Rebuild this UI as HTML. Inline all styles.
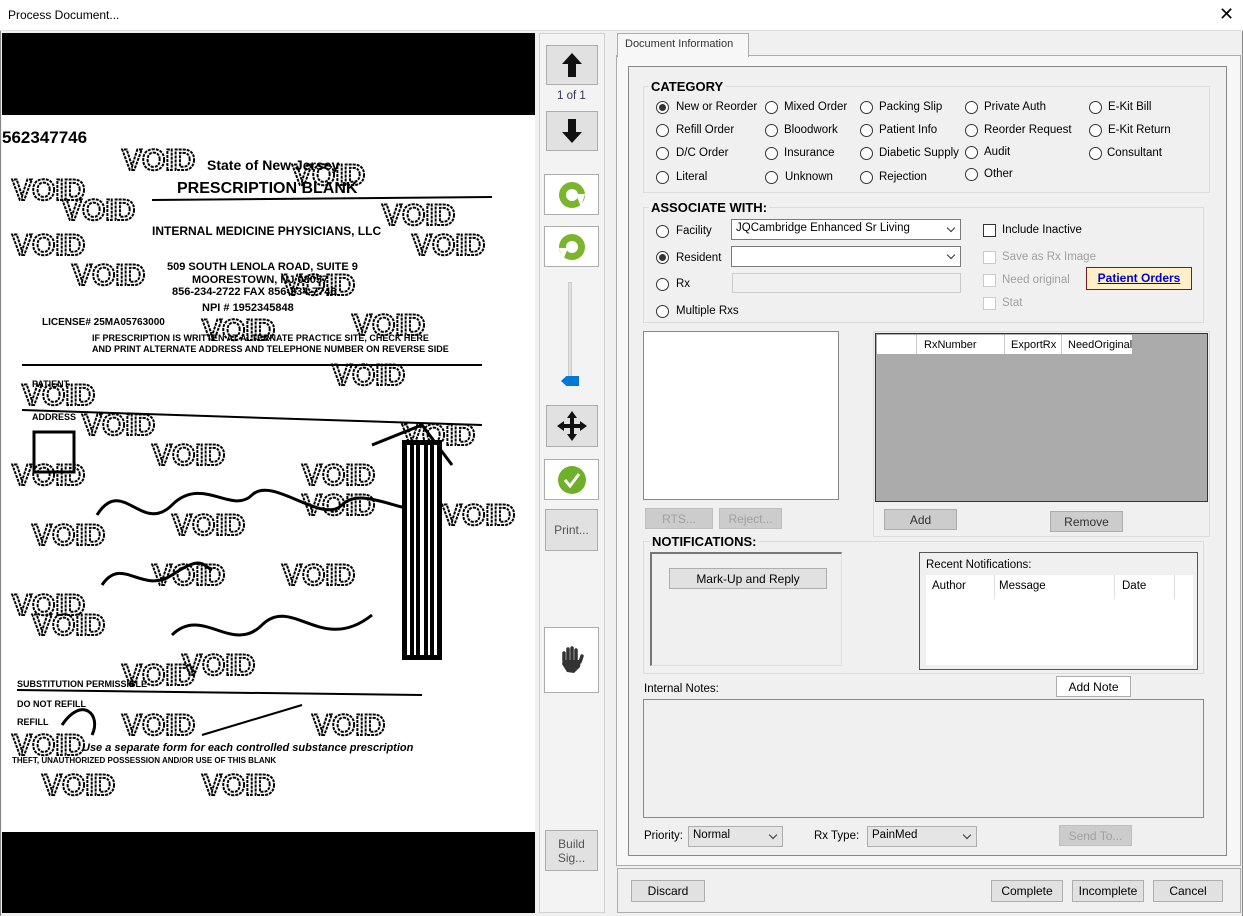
<!DOCTYPE html>
<html><head><meta charset="utf-8"><style>
*{box-sizing:border-box;margin:0;padding:0}
body{width:1243px;height:916px;background:#f0f0f0;font-family:"Liberation Sans",sans-serif;font-size:11px;color:#000;position:relative;overflow:hidden}
.a{position:absolute}
.btn{position:absolute;background:#e1e1e1;border:1px solid #adadad;text-align:center;font-size:12px;display:flex;align-items:center;justify-content:center}
.dis{color:#a0a0a0;background:#cccccc;border-color:#bfbfbf}
.grp{position:absolute;border:1px solid #dcdcdc}
.lbl{position:absolute;font-weight:bold;font-size:13px;background:#f0f0f0;padding:0 2px}
.r{position:absolute;width:13px;height:13px;border:1px solid #333;border-radius:50%;background:#fff}
.r.on::after{content:"";position:absolute;left:2px;top:2px;width:7px;height:7px;border-radius:50%;background:#333}
.t{position:absolute;white-space:nowrap;font-size:11.5px}
.cb{position:absolute;width:13px;height:13px;border:1px solid #333;background:#fff}
.cb.d{border-color:#ccc}
.sel{position:absolute;background:#fff;border:1px solid #7a7a7a;padding:2px 4px;font-size:11.5px}
.sel::after{content:"";position:absolute;right:6px;top:5px;width:5px;height:5px;border-right:1px solid #333;border-bottom:1px solid #333;transform:rotate(45deg)}
.tb{position:absolute;border:1px solid #adadad;background:#e1e1e1;display:flex;align-items:center;justify-content:center}
.tb.w{background:#fff}
</style></head><body>
<div class="a" style="left:0;top:0;width:1243px;height:31px;background:#fff;border-bottom:1px solid #ddd"></div>
<div class="t" style="left:8px;top:8px;font-size:12px">Process Document...</div>
<div class="t" style="left:1219px;top:4px;font-size:18px;font-weight:300">✕</div>
<div class="a" style="left:0;top:31px;width:1px;height:885px;background:#888"></div>
<div class="a" style="left:1242px;top:31px;width:1px;height:885px;background:#888"></div>

<!-- left image -->
<div class="a" style="left:2px;top:33px;width:533px;height:880px;background:#fff"></div>
<div class="a" style="left:2px;top:33px;width:533px;height:82px;background:#000"></div>
<div class="a" style="left:2px;top:832px;width:533px;height:81px;background:#000"></div>
<svg class="a" style="left:2px;top:115px" width="533" height="717" font-family="Liberation Sans" >
<g font-size="30" font-weight="bold" fill="none" stroke="#000" stroke-width="2" stroke-dasharray="3 1">
<text x="120" y="55">VOID</text><text x="290" y="70">VOID</text><text x="10" y="85">VOID</text><text x="60" y="105">VOID</text>
<text x="380" y="110">VOID</text><text x="10" y="140">VOID</text><text x="70" y="170">VOID</text><text x="280" y="180">VOID</text>
<text x="410" y="140">VOID</text><text x="200" y="225">VOID</text><text x="350" y="220">VOID</text><text x="20" y="290">VOID</text>
<text x="330" y="270">VOID</text><text x="80" y="320">VOID</text><text x="150" y="350">VOID</text><text x="400" y="330">VOID</text>
<text x="10" y="370">VOID</text><text x="300" y="370">VOID</text><text x="30" y="430">VOID</text><text x="170" y="420">VOID</text>
<text x="300" y="400">VOID</text><text x="440" y="410">VOID</text><text x="10" y="500">VOID</text><text x="150" y="470">VOID</text>
<text x="280" y="470">VOID</text><text x="30" y="520">VOID</text><text x="120" y="570">VOID</text><text x="10" y="640">VOID</text>
<text x="180" y="560">VOID</text><text x="310" y="620">VOID</text><text x="120" y="620">VOID</text><text x="200" y="680">VOID</text><text x="40" y="680">VOID</text>
</g>
<g fill="#000" font-weight="bold">
<text x="0" y="28" font-size="17">562347746</text>
<text x="205" y="55" font-size="14">State of New Jersey</text>
<text x="175" y="78" font-size="16">PRESCRIPTION BLANK</text>
<text x="150" y="120" font-size="12">INTERNAL MEDICINE PHYSICIANS, LLC</text>
<text x="165" y="155" font-size="11">509 SOUTH LENOLA ROAD, SUITE 9</text>
<text x="190" y="168" font-size="11">MOORESTOWN, NJ 08057</text>
<text x="170" y="180" font-size="11">856-234-2722 FAX 856-234-7746</text>
<text x="200" y="196" font-size="11">NPI # 1952345848</text>
<text x="40" y="210" font-size="10">LICENSE#  25MA05763000</text>
<text x="90" y="226" font-size="9">IF PRESCRIPTION IS WRITTEN AT ALTERNATE PRACTICE SITE, CHECK HERE</text>
<text x="90" y="237" font-size="9">AND PRINT ALTERNATE ADDRESS AND TELEPHONE NUMBER ON REVERSE SIDE</text>
<text x="30" y="272" font-size="9">PATIENT</text><text x="30" y="305" font-size="9">ADDRESS</text>
<text x="15" y="572" font-size="9">SUBSTITUTION PERMISSIBLE</text><text x="15" y="592" font-size="9">DO NOT REFILL</text>
<text x="15" y="610" font-size="9">REFILL</text><text x="80" y="636" font-size="11" font-style="italic">Use a separate form for each controlled substance prescription</text>
<text x="10" y="648" font-size="8">THEFT, UNAUTHORIZED POSSESSION AND/OR USE OF THIS BLANK</text>
</g>
<g stroke="#000" stroke-width="2" fill="none">
<path d="M150 85 L490 82"/><path d="M20 250 L480 250"/><path d="M20 295 L480 310"/><path d="M15 575 L420 580"/>
<rect x="32" y="317" width="40" height="40" stroke-width="3"/>
<path d="M95 400 C120 360 140 420 170 390 S230 400 250 380 S320 410 340 390 S400 400 430 395" stroke-width="3"/>
<path d="M100 470 C120 440 140 480 170 460 S200 450 210 455" stroke-width="3"/>
<path d="M170 520 C200 490 230 540 260 510 S320 540 370 500" stroke-width="3"/>
<path d="M60 610 C80 580 100 600 90 620" stroke-width="3"/><path d="M200 620 L300 590" stroke-width="2"/>
<path d="M370 330 L420 310 L450 350" stroke-width="3"/>
</g>
<g fill="#000"><rect x="400" y="325" width="40" height="220"/></g>
<g fill="#fff"><rect x="405" y="330" width="3" height="210"/><rect x="412" y="330" width="2" height="210"/><rect x="418" y="330" width="4" height="210"/><rect x="426" y="330" width="2" height="210"/><rect x="432" y="330" width="3" height="210"/></g>
</svg>

<!-- toolbar -->
<div class="a" style="left:539px;top:33px;width:66px;height:880px;border:1px solid #d0d0d0;background:#f3f3f3"></div>
<div class="tb" style="left:546px;top:45px;width:52px;height:40px"><svg width="22" height="26"><path d="M11 1 L21 12 L15 12 L15 25 L7 25 L7 12 L1 12Z" fill="#111"/></svg></div>
<div class="t" style="left:557px;top:90px;color:#335">1 of 1</div>
<div class="tb" style="left:546px;top:111px;width:52px;height:40px"><svg width="22" height="26"><path d="M11 25 L21 14 L15 14 L15 1 L7 1 L7 14 L1 14Z" fill="#111"/></svg></div>
<div class="tb w" style="left:544px;top:174px;width:55px;height:41px"><svg width="30" height="30"><circle cx="15" cy="15" r="13" fill="#7bb52e"/><circle cx="15" cy="15" r="6" fill="#fff"/><path d="M19 14 L28 14 L24 27 Z" fill="#fff"/></svg></div>
<div class="tb w" style="left:544px;top:226px;width:55px;height:41px"><svg width="30" height="30"><circle cx="15" cy="15" r="13" fill="#7bb52e"/><circle cx="15" cy="15" r="6" fill="#fff"/><path d="M11 16 L2 16 L6 28 Z" fill="#fff"/></svg></div>
<div class="a" style="left:568px;top:282px;width:4px;height:104px;background:#e0e0e0;border:1px solid #ccc"></div>
<div class="a" style="left:561px;top:376px;width:18px;height:10px;background:#0078d7;clip-path:polygon(30% 0,100% 0,100% 100%,30% 100%,0 50%)"></div>
<div class="tb" style="left:546px;top:405px;width:52px;height:42px"><svg width="34" height="34"><path d="M17 2 L22 9 L19 9 L19 15 L25 15 L25 12 L32 17 L25 22 L25 19 L19 19 L19 25 L22 25 L17 32 L12 25 L15 25 L15 19 L9 19 L9 22 L2 17 L9 12 L9 15 L15 15 L15 9 L12 9Z" fill="#111"/></svg></div>
<div class="tb w" style="left:544px;top:459px;width:55px;height:41px"><svg width="30" height="30"><circle cx="15" cy="15" r="14" fill="#6fb02a"/><path d="M8 15 L13 21 L22 9" stroke="#fff" stroke-width="3" fill="none"/></svg></div>
<div class="btn" style="left:545px;top:509px;width:53px;height:42px;color:#555">Print...</div>
<div class="tb w" style="left:544px;top:627px;width:55px;height:66px"><svg width="30" height="30"><path d="M7 16 L7 8 M11 15 L11 4 M15 15 L15 3 M19 15 L19 5 M23 17 L25 11" stroke="#333" stroke-width="3.5" stroke-linecap="round"/><path d="M6 15 L24 15 L23 22 L17 28 L10 27 L5 19Z" fill="#333"/></svg></div>
<div class="btn" style="left:545px;top:830px;width:53px;height:41px;color:#555;line-height:14px">Build<br>Sig...</div>

<!-- tab -->
<div class="a" style="left:616px;top:55px;width:625px;height:811px;border:1px solid #adadad;background:#f7f7f7"></div>
<div class="a" style="left:617px;top:33px;width:132px;height:24px;background:#f7f7f7;border:1px solid #adadad;border-bottom:none"></div>
<div class="t" style="left:625px;top:38px;font-size:11px;color:#333">Document Information</div>
<div class="a" style="left:628px;top:66px;width:599px;height:790px;border:1px solid #888;background:#f0f0f0"></div>

<!-- category -->
<div class="grp" style="left:643px;top:86px;width:567px;height:107px"></div>
<div class="lbl" style="left:649px;top:79px">CATEGORY</div>
<div class="r on" style="left:656px;top:101px"></div><div class="t" style="left:676px;top:101px">New or Reorder</div>
<div class="r" style="left:656px;top:124px"></div><div class="t" style="left:676px;top:124px">Refill Order</div>
<div class="r" style="left:656px;top:147px"></div><div class="t" style="left:676px;top:147px">D/C Order</div>
<div class="r" style="left:656px;top:171px"></div><div class="t" style="left:676px;top:171px">Literal</div>
<div class="r" style="left:765px;top:101px"></div><div class="t" style="left:784px;top:101px">Mixed Order</div>
<div class="r" style="left:765px;top:124px"></div><div class="t" style="left:784px;top:124px">Bloodwork</div>
<div class="r" style="left:765px;top:147px"></div><div class="t" style="left:784px;top:147px">Insurance</div>
<div class="r" style="left:765px;top:171px"></div><div class="t" style="left:785px;top:171px">Unknown</div>
<div class="r" style="left:860px;top:101px"></div><div class="t" style="left:879px;top:101px">Packing Slip</div>
<div class="r" style="left:860px;top:124px"></div><div class="t" style="left:879px;top:124px">Patient Info</div>
<div class="r" style="left:860px;top:147px"></div><div class="t" style="left:879px;top:147px">Diabetic Supply</div>
<div class="r" style="left:860px;top:171px"></div><div class="t" style="left:879px;top:171px">Rejection</div>
<div class="r" style="left:965px;top:101px"></div><div class="t" style="left:984px;top:101px">Private Auth</div>
<div class="r" style="left:965px;top:124px"></div><div class="t" style="left:984px;top:124px">Reorder Request</div>
<div class="r" style="left:965px;top:146px"></div><div class="t" style="left:984px;top:146px">Audit</div>
<div class="r" style="left:965px;top:168px"></div><div class="t" style="left:984px;top:168px">Other</div>
<div class="r" style="left:1089px;top:101px"></div><div class="t" style="left:1108px;top:101px">E-Kit Bill</div>
<div class="r" style="left:1089px;top:124px"></div><div class="t" style="left:1108px;top:124px">E-Kit Return</div>
<div class="r" style="left:1089px;top:147px"></div><div class="t" style="left:1107px;top:147px">Consultant</div>

<!-- associate -->
<div class="grp" style="left:643px;top:207px;width:561px;height:116px"></div>
<div class="lbl" style="left:649px;top:200px">ASSOCIATE WITH:</div>
<div class="r" style="left:656px;top:225px"></div><div class="t" style="left:676px;top:225px">Facility</div>
<div class="r on" style="left:656px;top:251px"></div><div class="t" style="left:676px;top:252px">Resident</div>
<div class="r" style="left:656px;top:278px"></div><div class="t" style="left:676px;top:278px">Rx</div>
<div class="r" style="left:656px;top:305px"></div><div class="t" style="left:676px;top:305px">Multiple Rxs</div>
<div class="sel" style="left:731px;top:219px;width:230px;height:21px">JQCambridge Enhanced Sr Living</div>
<div class="sel" style="left:731px;top:246px;width:230px;height:21px"></div>
<div class="a" style="left:732px;top:273px;width:229px;height:20px;background:#f0f0f0;border:1px solid #ccc"></div>
<div class="cb" style="left:983px;top:224px"></div><div class="t" style="left:1002px;top:224px">Include Inactive</div>
<div class="cb d" style="left:983px;top:251px"></div><div class="t" style="left:1002px;top:251px;color:#a0a0a0">Save as Rx Image</div>
<div class="cb d" style="left:983px;top:274px"></div><div class="t" style="left:1002px;top:274px;color:#a0a0a0">Need original</div>
<div class="cb d" style="left:983px;top:297px"></div><div class="t" style="left:1002px;top:297px;color:#a0a0a0">Stat</div>
<div class="a" style="left:1086px;top:267px;width:106px;height:23px;background:#fdf0c8;border:1px solid #7a1a1a;text-align:center;line-height:21px;font-weight:bold;font-size:12px;color:#0000cc;text-decoration:underline">Patient Orders</div>

<!-- lists -->
<div class="a" style="left:643px;top:331px;width:196px;height:169px;background:#fff;border:1px solid #888"></div>
<div class="btn dis" style="left:645px;top:508px;width:68px;height:21px">RTS...</div>
<div class="btn dis" style="left:719px;top:508px;width:63px;height:21px">Reject...</div>
<div class="grp" style="left:873px;top:331px;width:337px;height:206px"></div>
<div class="a" style="left:875px;top:333px;width:333px;height:169px;background:#ababab;border:1px solid #333"></div>
<div class="a" style="left:877px;top:335px;width:255px;height:19px;background:#fff"></div>
<div class="a" style="left:916px;top:335px;width:1px;height:19px;background:#ccc"></div>
<div class="a" style="left:1004px;top:335px;width:1px;height:19px;background:#ccc"></div>
<div class="a" style="left:1061px;top:335px;width:1px;height:19px;background:#ccc"></div>
<div class="t" style="left:924px;top:339px;font-size:11px">RxNumber</div>
<div class="t" style="left:1011px;top:339px;font-size:11px">ExportRx</div>
<div class="t" style="left:1068px;top:339px;font-size:11px;width:64px;overflow:hidden">NeedOriginal</div>
<div class="btn" style="left:884px;top:509px;width:73px;height:21px;background:#ccc;color:#333">Add</div>
<div class="btn" style="left:1050px;top:511px;width:73px;height:21px;background:#ccc;color:#333">Remove</div>

<!-- notifications -->
<div class="grp" style="left:643px;top:541px;width:561px;height:133px"></div>
<div class="lbl" style="left:650px;top:534px">NOTIFICATIONS:</div>
<div class="a" style="left:650px;top:552px;width:192px;height:114px;border:1px solid #ddd;border-top:2px solid #777;border-left:2px solid #777"></div>
<div class="btn" style="left:669px;top:568px;width:158px;height:21px">Mark-Up and Reply</div>
<div class="a" style="left:919px;top:552px;width:279px;height:118px;border:1px solid #555"></div>
<div class="t" style="left:926px;top:559px">Recent Notifications:</div>
<div class="a" style="left:926px;top:575px;width:267px;height:90px;background:#fff"></div>
<div class="t" style="left:932px;top:580px">Author</div>
<div class="t" style="left:999px;top:580px">Message</div>
<div class="t" style="left:1122px;top:580px">Date</div>
<div class="a" style="left:994px;top:575px;width:1px;height:24px;background:#ddd"></div>
<div class="a" style="left:1114px;top:575px;width:1px;height:24px;background:#ddd"></div>
<div class="a" style="left:1174px;top:575px;width:1px;height:24px;background:#ddd"></div>

<div class="t" style="left:644px;top:683px">Internal Notes:</div>
<div class="btn" style="left:1056px;top:676px;width:75px;height:21px;background:#fff">Add Note</div>
<div class="a" style="left:643px;top:699px;width:561px;height:119px;background:#f0f0f0;border:1px solid #888"></div>

<div class="t" style="left:644px;top:830px">Priority:</div>
<div class="sel" style="left:688px;top:826px;width:95px;height:21px;background:#e5e5e5;border-color:#adadad">Normal</div>
<div class="t" style="left:814px;top:830px">Rx Type:</div>
<div class="sel" style="left:867px;top:826px;width:110px;height:21px;background:#e5e5e5;border-color:#adadad">PainMed</div>
<div class="btn dis" style="left:1059px;top:825px;width:73px;height:21px">Send To...</div>

<!-- bottom -->
<div class="a" style="left:617px;top:868px;width:624px;height:45px;border:1px solid #adadad;background:#f0f0f0"></div>
<div class="btn" style="left:631px;top:880px;width:74px;height:22px">Discard</div>
<div class="btn" style="left:991px;top:880px;width:72px;height:22px">Complete</div>
<div class="btn" style="left:1072px;top:880px;width:72px;height:22px">Incomplete</div>
<div class="btn" style="left:1153px;top:880px;width:70px;height:22px">Cancel</div>
</body></html>
